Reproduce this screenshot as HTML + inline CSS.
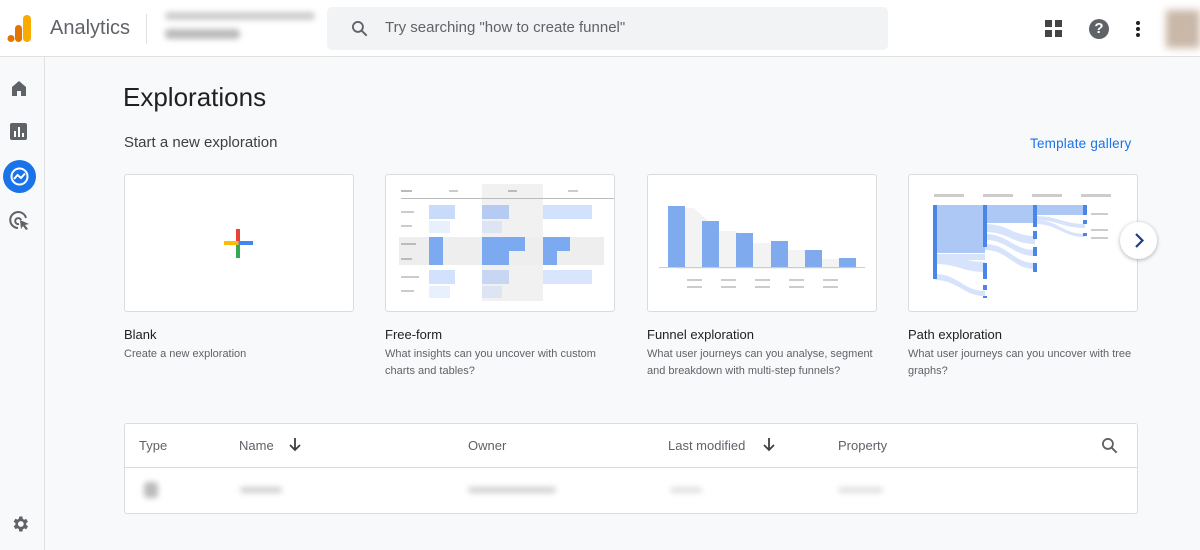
<!DOCTYPE html>
<html><head><meta charset="utf-8"><style>
*{margin:0;padding:0;box-sizing:border-box}
body{width:1200px;height:550px;overflow:hidden;background:#f8f9fa;font-family:"Liberation Sans",Arial,sans-serif;color:#202124;position:relative}
.a{position:absolute}
.top{left:0;top:0;width:1200px;height:57px;background:#fff;border-bottom:1px solid #e0e0e0}
.side{left:0;top:57px;width:45px;height:493px;background:#f8f9fa;border-right:1px solid #e0e0e0}
.card{background:#fff;border:1px solid #dadce0;border-radius:3px;width:230px;height:138px;top:174px}
.t{font-size:13px;color:#202124}
.d{font-size:11px;color:#5f6368;line-height:17px}
.blur{filter:blur(3px);background:#d0d0d0;border-radius:4px}
.th{font-size:13px;color:#5f6368;top:438px}
</style></head><body>
<div class="a top"></div>
<svg class="a" style="left:7px;top:15px" width="26" height="28" viewBox="0 0 26 28"><rect x="16" y="0" width="8" height="27" rx="4" fill="#f9ab00"/><rect x="8" y="10" width="7" height="17" rx="3.5" fill="#e37400"/><circle cx="4" cy="23.5" r="3.5" fill="#e37400"/></svg>
<div class="a" style="left:50px;top:17px;font-size:20px;color:#5f6368">Analytics</div>
<div class="a" style="left:146px;top:14px;width:1px;height:30px;background:#e0e0e0"></div>
<div class="a blur" style="left:165px;top:12px;width:150px;height:8px;background:#ccc"></div>
<div class="a blur" style="left:165px;top:29px;width:75px;height:10px;background:#bbb"></div>
<div class="a" style="left:327px;top:7px;width:561px;height:43px;background:#f1f3f4;border-radius:5px"></div>
<svg class="a" style="left:350px;top:19px" width="20" height="20" viewBox="0 0 24 24"><circle cx="9.5" cy="9.5" r="6" fill="none" stroke="#5f6368" stroke-width="2.2"/><path d="M14 14l6 6" stroke="#5f6368" stroke-width="2.4"/></svg>
<div class="a" style="left:385px;top:19px;font-size:15px;color:#5f6368">Try searching "how to create funnel"</div>
<svg class="a" style="left:1045px;top:20px" width="18" height="18"><rect x="0" y="0" width="7" height="7" fill="#444"/><rect x="10" y="0" width="7" height="7" fill="#444"/><rect x="0" y="10" width="7" height="7" fill="#444"/><rect x="10" y="10" width="7" height="7" fill="#444"/></svg>
<div class="a" style="left:1089px;top:19px;width:20px;height:20px;border-radius:50%;background:#5f6368;color:#fff;font-size:15px;font-weight:bold;text-align:center;line-height:20px">?</div>
<svg class="a" style="left:1135px;top:20px" width="6" height="18"><circle cx="3" cy="3" r="2" fill="#222"/><circle cx="3" cy="9" r="2" fill="#222"/><circle cx="3" cy="15" r="2" fill="#222"/></svg>
<div class="a" style="left:1166px;top:10px;width:34px;height:38px;background:#c9b8a8;filter:blur(4px)"></div>
<div class="a side"></div>
<svg class="a" style="left:10px;top:79px" width="18" height="18" viewBox="0 0 18 18"><path d="M2 8L9 2l7 6v9h-5v-5H7v5H2z" fill="#5f6368"/></svg>
<svg class="a" style="left:10px;top:123px" width="18" height="18"><rect x="0" y="0" width="17" height="17" rx="2" fill="#5f6368"/><rect x="4" y="8" width="2" height="6" fill="#fff"/><rect x="8" y="4" width="2" height="10" fill="#fff"/><rect x="12" y="10" width="2" height="4" fill="#fff"/></svg>
<div class="a" style="left:3px;top:160px;width:33px;height:33px;border-radius:50%;background:#1a73e8"></div>
<svg class="a" style="left:9px;top:166px" width="21" height="21" viewBox="0 0 21 21"><circle cx="10.5" cy="10.5" r="8" fill="none" stroke="#fff" stroke-width="2"/><path d="M5 13l3.5-4 3.5 3 4-4.5" fill="none" stroke="#fff" stroke-width="2"/></svg>
<svg class="a" style="left:9px;top:210px" width="22" height="22" viewBox="0 0 22 22"><path d="M17 8A8 8 0 1 0 9 18" fill="none" stroke="#5f6368" stroke-width="2"/><path d="M12 10a3 3 0 1 0-2 4" fill="none" stroke="#5f6368" stroke-width="2"/><path d="M11 10l9 4-4 1 3 4-2 1-3-4-2 3z" fill="#5f6368"/></svg>
<svg class="a" style="left:10px;top:514px" width="20" height="20" viewBox="0 0 24 24"><path fill="#5f6368" d="M19.4 13a7.5 7.5 0 0 0 0-2l2.1-1.6-2-3.5-2.5 1a7 7 0 0 0-1.7-1L15 3h-4l-.4 2.7a7 7 0 0 0-1.7 1l-2.5-1-2 3.5L6.6 11a7.5 7.5 0 0 0 0 2l-2.1 1.6 2 3.5 2.5-1a7 7 0 0 0 1.7 1L11 21h4l.4-2.7a7 7 0 0 0 1.7-1l2.5 1 2-3.5zM13 15.5a3.5 3.5 0 1 1 0-7 3.5 3.5 0 0 1 0 7z"/></svg>

<div class="a" style="left:123px;top:82px;font-size:26px">Explorations</div>
<div class="a" style="left:124px;top:134px;font-size:15px;color:#3c4043">Start a new exploration</div>
<div class="a" style="left:1030px;top:136px;font-size:13.5px;color:#1a73e8;letter-spacing:.2px">Template gallery</div>

<div class="a card" style="left:124px"></div>
<div class="a" style="left:236px;top:229px;width:4px;height:29px;background:linear-gradient(#ea4335 50%,#34a853 50%)"></div>
<div class="a" style="left:224px;top:241px;width:29px;height:4px;background:linear-gradient(90deg,#fbbc04 50%,#4285f4 50%)"></div>

<div class="a card" style="left:385px"></div>
<div class="a" style="left:482px;top:184px;width:61px;height:117px;background:#f1f1f1"></div>
<div class="a" style="left:401px;top:198px;width:213px;height:1px;background:#bbb"></div>
<div class="a" style="left:401px;top:190px;width:11px;height:2px;background:#bbb"></div>
<div class="a" style="left:449px;top:190px;width:9px;height:2px;background:#ccc"></div>
<div class="a" style="left:508px;top:190px;width:9px;height:2px;background:#bbb"></div>
<div class="a" style="left:568px;top:190px;width:10px;height:2px;background:#ccc"></div>
<div class="a" style="left:401px;top:211px;width:13px;height:2px;background:#ccc"></div>
<div class="a" style="left:401px;top:225px;width:11px;height:2px;background:#ccc"></div>
<div class="a" style="left:399px;top:237px;width:205px;height:28px;background:#eee"></div>
<div class="a" style="left:401px;top:243px;width:15px;height:2px;background:#bbb"></div>
<div class="a" style="left:401px;top:258px;width:11px;height:2px;background:#bbb"></div>
<div class="a" style="left:401px;top:276px;width:18px;height:2px;background:#ccc"></div>
<div class="a" style="left:401px;top:290px;width:13px;height:2px;background:#ccc"></div>
<div class="a" style="left:429px;top:205px;width:26px;height:14px;background:#c9dbfb"></div>
<div class="a" style="left:482px;top:205px;width:27px;height:14px;background:#b6cbf3"></div>
<div class="a" style="left:543px;top:205px;width:49px;height:14px;background:#d2e1fc"></div>
<div class="a" style="left:429px;top:221px;width:21px;height:12px;background:#e8f0fe"></div>
<div class="a" style="left:482px;top:221px;width:20px;height:12px;background:#dde5f5"></div>
<div class="a" style="left:429px;top:237px;width:14px;height:28px;background:#7baaf0"></div>
<div class="a" style="left:482px;top:237px;width:43px;height:14px;background:#7baaf0"></div>
<div class="a" style="left:482px;top:251px;width:27px;height:14px;background:#7baaf0"></div>
<div class="a" style="left:543px;top:237px;width:27px;height:14px;background:#7baaf0"></div>
<div class="a" style="left:543px;top:251px;width:14px;height:14px;background:#7baaf0"></div>
<div class="a" style="left:429px;top:270px;width:26px;height:14px;background:#d2e1fc"></div>
<div class="a" style="left:482px;top:270px;width:27px;height:14px;background:#c7d6f2"></div>
<div class="a" style="left:543px;top:270px;width:49px;height:14px;background:#d8e5fc"></div>
<div class="a" style="left:429px;top:286px;width:21px;height:12px;background:#e8f0fe"></div>
<div class="a" style="left:482px;top:286px;width:20px;height:12px;background:#dde5f5"></div>

<div class="a card" style="left:647px"></div>
<svg class="a" style="left:647px;top:174px" width="230" height="138">
<polygon points="30,34 47,34 72,57 89,57 106,69 123,69 141,76 158,76 175,85 192,85 209,92 209,95 30,95" fill="#f3f3f3"/>
<g fill="#80aaee"><rect x="21" y="32" width="17" height="61"/><rect x="55" y="47" width="17" height="46"/><rect x="89" y="59" width="17" height="34"/><rect x="124" y="67" width="17" height="26"/><rect x="158" y="76" width="17" height="17"/><rect x="192" y="84" width="17" height="9"/></g>
<rect x="12" y="93" width="206" height="1" fill="#ccc"/>
<g fill="#ccc"><rect x="40" y="105" width="15" height="2"/><rect x="40" y="112" width="15" height="2"/><rect x="74" y="105" width="15" height="2"/><rect x="74" y="112" width="15" height="2"/><rect x="108" y="105" width="15" height="2"/><rect x="108" y="112" width="15" height="2"/><rect x="142" y="105" width="15" height="2"/><rect x="142" y="112" width="15" height="2"/><rect x="176" y="105" width="15" height="2"/><rect x="176" y="112" width="15" height="2"/></g>
</svg>

<div class="a card" style="left:908px"></div>
<svg class="a" style="left:908px;top:174px" width="230" height="138">
<g fill="#ccc"><rect x="26" y="20" width="30" height="3"/><rect x="75" y="20" width="30" height="3"/><rect x="124" y="20" width="30" height="3"/><rect x="173" y="20" width="30" height="3"/><rect x="183" y="39" width="17" height="2"/><rect x="183" y="55" width="17" height="2"/><rect x="183" y="63" width="17" height="2"/></g>
<g fill="#aec8f6"><rect x="27" y="31" width="50" height="48"/><rect x="77" y="31" width="50" height="18"/><rect x="127" y="31" width="50" height="10"/></g>
<g fill="#d6e3fb"><path d="M27 80h50v6H27z"/><path d="M27 80C50 80 55 88 77 88v10C55 98 50 90 27 90z"/><path d="M27 100C50 100 55 117 77 117v5C55 122 50 106 27 106z"/><path d="M77 50C100 50 105 62 127 62v8C105 70 100 58 77 58z"/><path d="M77 60C100 60 105 76 127 76v6C105 82 100 66 77 66z"/><path d="M77 70C100 70 105 89 127 89v6C105 95 100 76 77 76z"/><path d="M127 42C150 42 155 50 177 50v4C155 54 150 46 127 46z"/><path d="M127 46C150 46 155 60 177 60v3C155 63 150 50 127 50z"/></g>
<g fill="#4a86e8"><rect x="25" y="31" width="4" height="74"/><rect x="75" y="31" width="4" height="42"/><rect x="75" y="89" width="4" height="16"/><rect x="75" y="111" width="4" height="5"/><rect x="75" y="122" width="4" height="2"/><rect x="125" y="31" width="4" height="22"/><rect x="125" y="57" width="4" height="8"/><rect x="125" y="73" width="4" height="9"/><rect x="125" y="89" width="4" height="9"/><rect x="175" y="31" width="4" height="10"/><rect x="175" y="46" width="4" height="4"/><rect x="175" y="59" width="4" height="3"/></g>
</svg>
<div class="a" style="left:1120px;top:222px;width:37px;height:37px;border-radius:50%;background:#fff;box-shadow:0 1px 4px rgba(0,0,0,.3)"></div>
<svg class="a" style="left:1131px;top:232px" width="16" height="17"><path d="M5 2l6.5 6.5L5 15" fill="none" stroke="#1a3e8c" stroke-width="2.2"/></svg>

<div class="a t" style="left:124px;top:327px">Blank</div>
<div class="a d" style="left:124px;top:346px">Create a new exploration</div>
<div class="a t" style="left:385px;top:327px">Free-form</div>
<div class="a d" style="left:385px;top:346px;width:230px">What insights can you uncover with custom charts and tables?</div>
<div class="a t" style="left:647px;top:327px">Funnel exploration</div>
<div class="a d" style="left:647px;top:346px;width:235px">What user journeys can you analyse, segment and breakdown with multi-step funnels?</div>
<div class="a t" style="left:908px;top:327px">Path exploration</div>
<div class="a d" style="left:908px;top:346px;width:235px">What user journeys can you uncover with tree graphs?</div>

<div class="a" style="left:124px;top:423px;width:1014px;height:91px;background:#fff;border:1px solid #dadce0;border-radius:3px"></div>
<div class="a" style="left:125px;top:467px;width:1012px;height:1px;background:#dadce0"></div>
<div class="a th" style="left:139px">Type</div>
<div class="a th" style="left:239px">Name</div>
<svg class="a" style="left:288px;top:437px" width="14" height="15"><path d="M7 1v12M2 8l5 5 5-5" fill="none" stroke="#3c4043" stroke-width="1.8"/></svg>
<div class="a th" style="left:468px">Owner</div>
<div class="a th" style="left:668px">Last modified</div>
<svg class="a" style="left:762px;top:437px" width="14" height="15"><path d="M7 1v12M2 8l5 5 5-5" fill="none" stroke="#3c4043" stroke-width="1.8"/></svg>
<div class="a th" style="left:838px">Property</div>
<svg class="a" style="left:1100px;top:436px" width="20" height="20" viewBox="0 0 24 24"><circle cx="9.5" cy="9.5" r="6" fill="none" stroke="#5f6368" stroke-width="2.2"/><path d="M14 14l6 6" stroke="#5f6368" stroke-width="2.4"/></svg>
<div class="a blur" style="left:144px;top:482px;width:14px;height:16px;background:#bbb"></div>
<div class="a blur" style="left:240px;top:487px;width:42px;height:6px"></div>
<div class="a blur" style="left:468px;top:487px;width:88px;height:6px"></div>
<div class="a blur" style="left:670px;top:487px;width:32px;height:6px;background:#e0e0e0"></div>
<div class="a blur" style="left:838px;top:487px;width:45px;height:6px;background:#e0e0e0"></div>
</body></html>
